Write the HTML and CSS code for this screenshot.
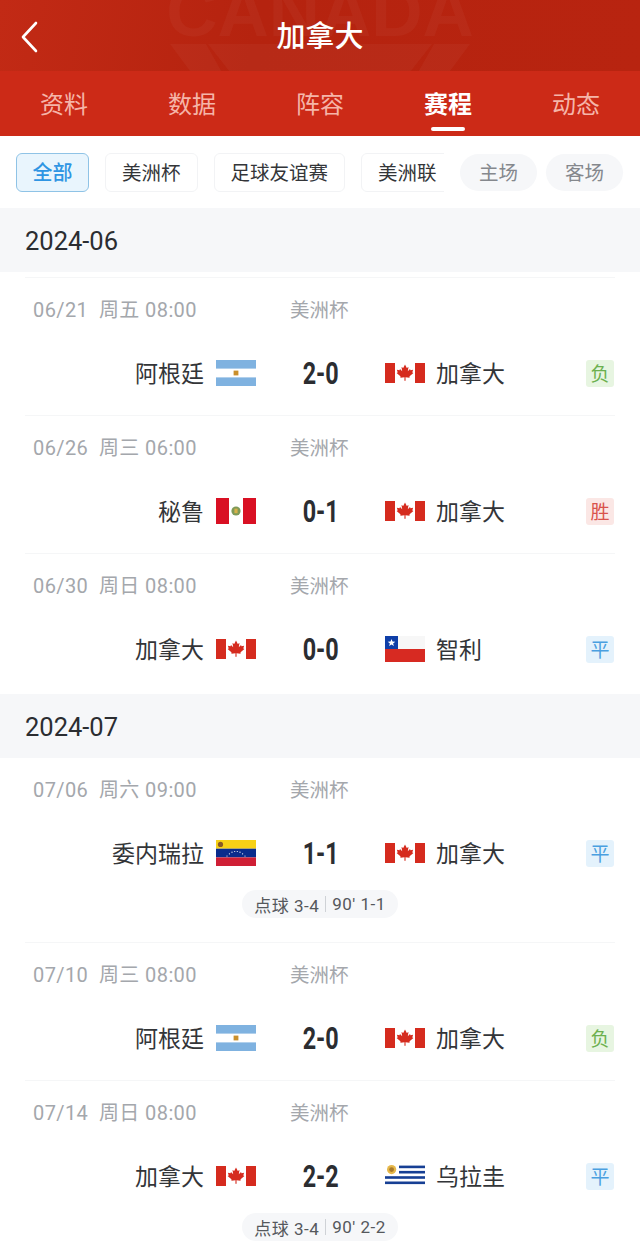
FILE: index.html
```html
<!DOCTYPE html>
<html lang="zh">
<head>
<meta charset="utf-8">
<title>加拿大 赛程</title>
<link rel="stylesheet" href="styles.css">
</head>
<body>
<svg class="defs" width="0" height="0" aria-hidden="true">
  <defs>
    <symbol id="f-ca" viewBox="0 0 40 20">
      <rect width="40" height="20" fill="#fff"/>
      <rect width="10" height="20" fill="#d52b1e"/>
      <rect x="30" width="10" height="20" fill="#d52b1e"/>
      <path fill="#d52b1e" d="M20 1.6l1.8 3.3 1.7-.9-.7 4.2 2.2-2.2.5 1.3 2.6-.5-.8 2.8 1.1.5-3.8 3.2-.1 1.4-4-.5.1 3.6h-1.2l.1-3.6-4 .5-.1-1.4-3.8-3.2 1.1-.5-.8-2.8 2.6.5.5-1.3 2.2 2.2-.7-4.2 1.7.9z"/>
    </symbol>
    <symbol id="f-ar" viewBox="0 0 40 26">
      <rect width="40" height="26" fill="#fff"/>
      <rect width="40" height="8.6" fill="#7fb2e0"/>
      <rect y="17.4" width="40" height="8.6" fill="#7fb2e0"/>
      <rect x="17.6" y="10.6" width="4.8" height="4.8" fill="#c98f2c"/>
    </symbol>
    <symbol id="f-pe" viewBox="0 0 40 26">
      <rect width="40" height="26" fill="#fff"/>
      <rect width="13" height="26" fill="#d91023"/>
      <rect x="27" width="13" height="26" fill="#d91023"/>
      <circle cx="20" cy="13" r="4.6" fill="#7f9a58"/>
      <rect x="18.4" y="10.6" width="3.2" height="4.6" fill="#d8b24a"/>
    </symbol>
    <symbol id="f-cl" viewBox="0 0 40 26">
      <rect width="40" height="13" fill="#f7f7f7"/>
      <rect y="13" width="40" height="13" fill="#d72a22"/>
      <rect width="13" height="13" fill="#0f3fa8"/>
      <path fill="#fff" d="M6.5 3l1 2.6 2.8.1-2.2 1.7.8 2.7-2.4-1.6-2.4 1.6.8-2.7-2.2-1.7 2.8-.1z"/>
    </symbol>
    <symbol id="f-ve" viewBox="0 0 40 26">
      <rect width="40" height="8.7" fill="#f7d116"/>
      <rect y="8.7" width="40" height="8.7" fill="#0a2c8c"/>
      <rect y="17.4" width="40" height="8.6" fill="#cf1f35"/>
      <circle cx="4.5" cy="4.4" r="2.6" fill="#8a5a24"/>
      <g fill="#fff">
        <circle cx="11" cy="16" r=".6"/><circle cx="13.4" cy="13.8" r=".6"/><circle cx="16" cy="12.2" r=".6"/><circle cx="18.7" cy="11.5" r=".6"/><circle cx="21.3" cy="11.5" r=".6"/><circle cx="24" cy="12.2" r=".6"/><circle cx="26.6" cy="13.8" r=".6"/><circle cx="29" cy="16" r=".6"/>
      </g>
    </symbol>
    <symbol id="f-uy" viewBox="0 0 40 24">
      <rect width="40" height="24" fill="#fff"/>
      <g fill="#163f94">
        <rect x="14" y="1.6" width="26" height="2.6"/>
        <rect x="14" y="6.9" width="26" height="2.6"/>
        <rect y="12.2" width="40" height="2.6"/>
        <rect y="17.5" width="40" height="2.6"/>
      </g>
      <circle cx="6.6" cy="5.6" r="4.6" fill="#e6b84a"/>
      <circle cx="6.6" cy="5.6" r="2.4" fill="#a8792a"/>
    </symbol>
  </defs>
</svg>

<header class="hero">
  <div class="hero-mark" aria-hidden="true">CANADA</div>
  <svg class="hero-shield" viewBox="0 0 300 46" aria-hidden="true">
    <path d="M0 0H36L62 46H34zM38 0H262L226 46H74zM264 0H300L266 46H238z" fill="#fff" fill-opacity=".035"/>
  </svg>
  <svg class="back" viewBox="0 0 18 32" aria-hidden="true"><path d="M16 2L3 16l13 14" fill="none" stroke="#fff" stroke-width="2.6" stroke-linecap="round" stroke-linejoin="round"/></svg>
  <h1 class="title">加拿大</h1>
</header>

<nav class="tabs">
  <a class="tab">资料</a>
  <a class="tab">数据</a>
  <a class="tab">阵容</a>
  <a class="tab tab-active">赛程</a>
  <a class="tab">动态</a>
</nav>

<div class="filters">
  <div class="chips">
    <span class="chip chip-active">全部</span>
    <span class="chip">美洲杯</span>
    <span class="chip">足球友谊赛</span>
    <span class="chip">美洲联</span>
  </div>
  <div class="venues">
    <span class="venue">主场</span>
    <span class="venue">客场</span>
  </div>
</div>

<section class="month">
  <h2 class="month-head">2024-06</h2>
  <div class="list list-first">
    <article class="match">
      <div class="meta"><span class="when">06/21&nbsp; 周五 08:00</span><span class="cup">美洲杯</span></div>
      <div class="teams">
        <span class="home">阿根廷</span><svg class="flag flag-ar"><use href="#f-ar"/></svg>
        <span class="score-cell"><b class="score">2-0</b></span>
        <svg class="flag flag-ca"><use href="#f-ca"/></svg><span class="away">加拿大</span>
        <span class="res res-l">负</span>
      </div>
    </article>
    <article class="match">
      <div class="meta"><span class="when">06/26&nbsp; 周三 06:00</span><span class="cup">美洲杯</span></div>
      <div class="teams">
        <span class="home">秘鲁</span><svg class="flag flag-pe"><use href="#f-pe"/></svg>
        <span class="score-cell"><b class="score">0-1</b></span>
        <svg class="flag flag-ca"><use href="#f-ca"/></svg><span class="away">加拿大</span>
        <span class="res res-w">胜</span>
      </div>
    </article>
    <article class="match match-last">
      <div class="meta"><span class="when">06/30&nbsp; 周日 08:00</span><span class="cup">美洲杯</span></div>
      <div class="teams">
        <span class="home">加拿大</span><svg class="flag flag-ca"><use href="#f-ca"/></svg>
        <span class="score-cell"><b class="score">0-0</b></span>
        <svg class="flag flag-cl"><use href="#f-cl"/></svg><span class="away">智利</span>
        <span class="res res-d">平</span>
      </div>
    </article>
  </div>
</section>

<section class="month">
  <h2 class="month-head">2024-07</h2>
  <div class="list">
    <article class="match">
      <div class="meta"><span class="when">07/06&nbsp; 周六 09:00</span><span class="cup">美洲杯</span></div>
      <div class="teams">
        <span class="home">委内瑞拉</span><svg class="flag flag-ve"><use href="#f-ve"/></svg>
        <span class="score-cell"><b class="score">1-1</b></span>
        <svg class="flag flag-ca"><use href="#f-ca"/></svg><span class="away">加拿大</span>
        <span class="res res-d">平</span>
      </div>
      <div class="pen-row"><span class="pen">点球 3-4<i class="pen-sep"></i>90' 1-1</span></div>
    </article>
    <article class="match">
      <div class="meta"><span class="when">07/10&nbsp; 周三 08:00</span><span class="cup">美洲杯</span></div>
      <div class="teams">
        <span class="home">阿根廷</span><svg class="flag flag-ar"><use href="#f-ar"/></svg>
        <span class="score-cell"><b class="score">2-0</b></span>
        <svg class="flag flag-ca"><use href="#f-ca"/></svg><span class="away">加拿大</span>
        <span class="res res-l">负</span>
      </div>
    </article>
    <article class="match match-last">
      <div class="meta"><span class="when">07/14&nbsp; 周日 08:00</span><span class="cup">美洲杯</span></div>
      <div class="teams">
        <span class="home">加拿大</span><svg class="flag flag-ca"><use href="#f-ca"/></svg>
        <span class="score-cell"><b class="score">2-2</b></span>
        <svg class="flag flag-uy"><use href="#f-uy"/></svg><span class="away">乌拉圭</span>
        <span class="res res-d">平</span>
      </div>
      <div class="pen-row"><span class="pen">点球 3-4<i class="pen-sep"></i>90' 2-2</span></div>
    </article>
  </div>
</section>
</body>
</html>
```
FILE: styles.css
```css
* { box-sizing: border-box; margin: 0; padding: 0; }
html, body { height: 1244px; overflow: hidden; }
body {
  background: #fff;
  font-family: Roboto, "Noto Sans CJK SC", sans-serif;
  color: #2b2d31;
}
.defs { display: block; height: 0; }

.hero {
  position: relative;
  height: 71px;
  overflow: hidden;
  display: flex;
  align-items: center;
  justify-content: center;
  background: linear-gradient(100deg, #c22a15 0%, #b5230f 40%, #b82410 100%);
}
.hero-mark {
  position: absolute;
  left: 160px;
  top: -24px;
  width: 320px;
  text-align: center;
  font: 900 71px/1 "Liberation Sans", sans-serif;
  color: rgba(255, 255, 255, .035);
}
.hero-shield { position: absolute; left: 170px; top: 44px; width: 300px; height: 46px; }
.back { position: absolute; left: 20px; top: 21px; width: 18px; height: 32px; }
.title {
  position: relative;
  font: 500 29px/1 "Noto Sans CJK SC", sans-serif;
  margin-top: -2px;
  color: #fff;
}

.tabs {
  display: grid;
  grid-template-columns: repeat(5, 128px);
  height: 65px;
  background: #cc2a17;
}
.tab {
  position: relative;
  text-align: center;
  font: 400 24px/64px "Noto Sans CJK SC", sans-serif;
  color: #f5b5a9;
}
.tab-active { color: #fff; font-weight: 700; }
.tab-active::after {
  content: "";
  position: absolute;
  left: 47px;
  bottom: 5px;
  width: 34px;
  height: 4px;
  border-radius: 2px;
  background: #fff;
}

.filters {
  display: flex;
  align-items: center;
  height: 72px;
  padding: 0 17px 0 16px;
  font-family: "Noto Sans CJK SC", sans-serif;
}
.chips {
  display: flex;
  gap: 16px;
  width: 428px;
  overflow: hidden;
  flex-shrink: 0;
}
.chip {
  flex-shrink: 0;
  height: 39px;
  padding: 0 16px;
  border: 1px solid #f2f3f5;
  border-radius: 6px;
  font-size: 19.5px;
  line-height: 35px;
  color: #333538;
}
.chip-active {
  padding: 0 15.5px;
  border-color: #8fc3e6;
  background: #e9f5fd;
  color: #2f95e3;
  font-size: 20px;
  font-weight: 500;
}
.venues { display: flex; gap: 9px; margin-left: 16px; }
.venue {
  height: 37px;
  width: 77px;
  text-align: center;
  border-radius: 19px;
  background: #f6f7f9;
  font-size: 19.5px;
  line-height: 35px;
  color: #85888d;
}

.month-head {
  height: 64px;
  padding-left: 25px;
  background: #f6f7f9;
  font-weight: 400;
  font-size: 25.5px;
  line-height: 67px;
  color: #2b2d31;
}
.list { padding: 0 25px; }
.list-first { padding-top: 5px; padding-bottom: 3px; }
.list-first .match:first-child { border-top: 1px solid #f5f6f7; }
.match {
  padding: 18px 0 22px;
  border-bottom: 1px solid #f5f6f7;
}
.match-last { border-bottom: 0; }
.meta {
  display: grid;
  grid-template-columns: 265px 60px;
  height: 28px;
  padding-left: 8px;
  font-size: 20px;
  line-height: 28px;
  color: #a4a7ac;
}
.when { white-space: nowrap; letter-spacing: .4px; }
.cup { font-family: "Noto Sans CJK SC", sans-serif; font-size: 19.5px; white-space: nowrap; line-height: 26px; margin-left: -8px; }

.teams {
  display: grid;
  grid-template-columns: 191px 40px 129px 40px 1fr 28px;
  align-items: center;
  height: 40px;
  margin-top: 29px;
  margin-right: 1px;
  font: 400 23px/38px "Noto Sans CJK SC", sans-serif;
  color: #333538;
}
.home { text-align: right; padding: 0 12px 2px 0; white-space: nowrap; }
.away { padding: 0 0 2px 11px; white-space: nowrap; }
.flag { display: block; width: 40px; }
.flag-ca { height: 20px; }
.flag-ar, .flag-pe, .flag-cl, .flag-ve { height: 26px; }
.flag-uy { height: 24px; }
.score-cell { text-align: center; }
.score {
  display: inline-block;
  transform: scaleX(.73);
  font: 700 32px/40px Roboto, sans-serif;
  color: #2b2d31;
}
.res {
  width: 28px;
  height: 27px;
  border-radius: 3px;
  text-align: center;
  font-size: 19px;
  line-height: 26px;
}
.res-l { background: #e7f5e1; color: #6cb04f; }
.res-w { background: #fbe7e5; color: #d9534c; }
.res-d { background: #e4f2fc; color: #4a9fe0; }

.pen-row { display: flex; justify-content: center; margin-top: 17px; margin-bottom: 2px; }
.pen {
  display: flex;
  align-items: center;
  height: 28px;
  padding: 0 12px;
  border-radius: 14px;
  background: #f6f7f9;
  font-size: 17px;
  letter-spacing: .5px;
  color: #55585c;
  white-space: nowrap;
}
.pen-sep { width: 1px; height: 16px; margin: 0 6px; background: #cfd2d6; }
```
